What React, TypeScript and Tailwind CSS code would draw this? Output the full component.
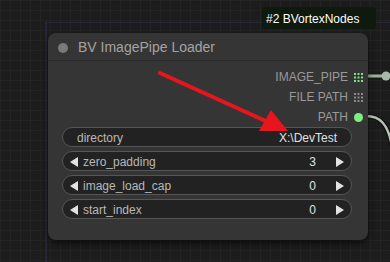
import type { ReactNode } from "react";

type Widget = {
  label: string;
  value: string;
  combo?: boolean;
};

const widgets: Widget[] = [
  { label: "directory", value: "X:\\DevTest", combo: true },
  { label: "zero_padding", value: "3" },
  { label: "image_load_cap", value: "0" },
  { label: "start_index", value: "0" },
];

function GridDots({ color }: { color: string }) {
  return (
    <svg width="9" height="9" viewBox="0 0 9 9">
      {[0, 3.5, 7].map((y) =>
        [0, 3.5, 7].map((x) => (
          <rect key={`${x}-${y}`} x={x} y={y} width="2" height="2" fill={color} />
        ))
      )}
    </svg>
  );
}

function Output({ label, children }: { label: string; children: ReactNode }) {
  return (
    <div className="flex h-5 items-center justify-end gap-[6px] pr-[5px]">
      <span className="text-[12px] text-[#9a9a9a]">{label}</span>
      <span className="flex w-[9px] justify-center">{children}</span>
    </div>
  );
}

function Arrow({ dir }: { dir: "left" | "right" }) {
  return (
    <svg width="8" height="10" viewBox="0 0 8 10">
      {dir === "left" ? (
        <polygon points="8,0 8,10 0,5" fill="#e2e2e2" />
      ) : (
        <polygon points="0,0 0,10 8,5" fill="#e2e2e2" />
      )}
    </svg>
  );
}

function WidgetRow({ w }: { w: Widget }) {
  return (
    <div className="flex h-5 items-center rounded-full border border-[#555] bg-[#222] pt-px text-[12px]">
      {w.combo ? (
        <>
          <span className="pl-[14px] text-[#b8b8b8]">{w.label}</span>
          <span className="ml-auto pr-[14px] text-[#e0e0e0]">{w.value}</span>
        </>
      ) : (
        <>
          <span className="pl-[7px]">
            <Arrow dir="left" />
          </span>
          <span className="pl-[5px] text-[#b8b8b8]">{w.label}</span>
          <span className="ml-auto pr-[20px] text-[#e0e0e0]">{w.value}</span>
          <span className="pr-[7px]">
            <Arrow dir="right" />
          </span>
        </>
      )}
    </div>
  );
}

export default function App() {
  return (
    <div
      className="relative h-[262px] w-[390px] overflow-hidden bg-[#1c1c1c] bg-[linear-gradient(#232323_1px,transparent_1px),linear-gradient(90deg,#232323_1px,transparent_1px)] bg-[size:10px_10px]"
      style={{ fontFamily: '"Liberation Sans", Arial, sans-serif' }}
    >
      {/* group outline */}
      <div className="absolute left-[45px] top-[22px] h-[260px] w-[360px] border-l-2 border-t border-[#262638]" />

      {/* wires */}
      <svg className="absolute left-0 top-0" width="390" height="262">
        <line x1="360" y1="76" x2="386" y2="76" stroke="#9fb09f" strokeWidth="3" />
        <circle cx="386" cy="76" r="4.5" fill="#a9b9a9" />
        <path
          d="M366 116 C 380 116, 388 124, 392 146"
          stroke="#111"
          strokeWidth="5"
          fill="none"
        />
        <path
          d="M366 116 C 380 116, 388 124, 392 146"
          stroke="#b4c4b4"
          strokeWidth="2.5"
          fill="none"
        />
      </svg>

      {/* node */}
      <div className="absolute left-[48px] top-[33px] flex h-[207px] w-[320px] flex-col rounded-lg bg-[#353535] shadow-[0_3px_6px_rgba(0,0,0,0.6)]">
        <div className="flex h-[28px] items-center gap-[10px] border-b border-[#2b2b2b] pl-[10px] pt-[2px]">
          <span className="h-[10px] w-[10px] rounded-full bg-[#7a7a7a]" />
          <span className="text-[14px] text-[#a3a3a3]">BV ImagePipe Loader</span>
        </div>
        <div className="flex flex-col pt-[6px]">
          <Output label="IMAGE_PIPE">
            <GridDots color="#7ee07e" />
          </Output>
          <Output label="FILE PATH">
            <GridDots color="#8a8a8a" />
          </Output>
          <Output label="PATH">
            <span className="h-[9px] w-[9px] rounded-full bg-[#7cf07c]" />
          </Output>
        </div>
        <div className="flex flex-col gap-[4px] pl-[14px] pr-[16px]">
          {widgets.map((w) => (
            <WidgetRow key={w.label} w={w} />
          ))}
        </div>
      </div>

      {/* badge */}
      <div className="absolute left-[262px] top-[7px] flex h-[22px] items-center rounded-[4px] bg-[#0d1a0d] pl-[4px] pr-[17px] pt-px text-[12px] text-white">
        #2 BVortexNodes
      </div>

      {/* annotation arrow */}
      <svg className="absolute left-0 top-0" width="390" height="262">
        <line x1="160" y1="73" x2="270" y2="123" stroke="#e8151f" strokeWidth="4" strokeLinecap="round" />
        <polygon points="288,131 259,131 271,110" fill="#e8151f" />
      </svg>
    </div>
  );
}
